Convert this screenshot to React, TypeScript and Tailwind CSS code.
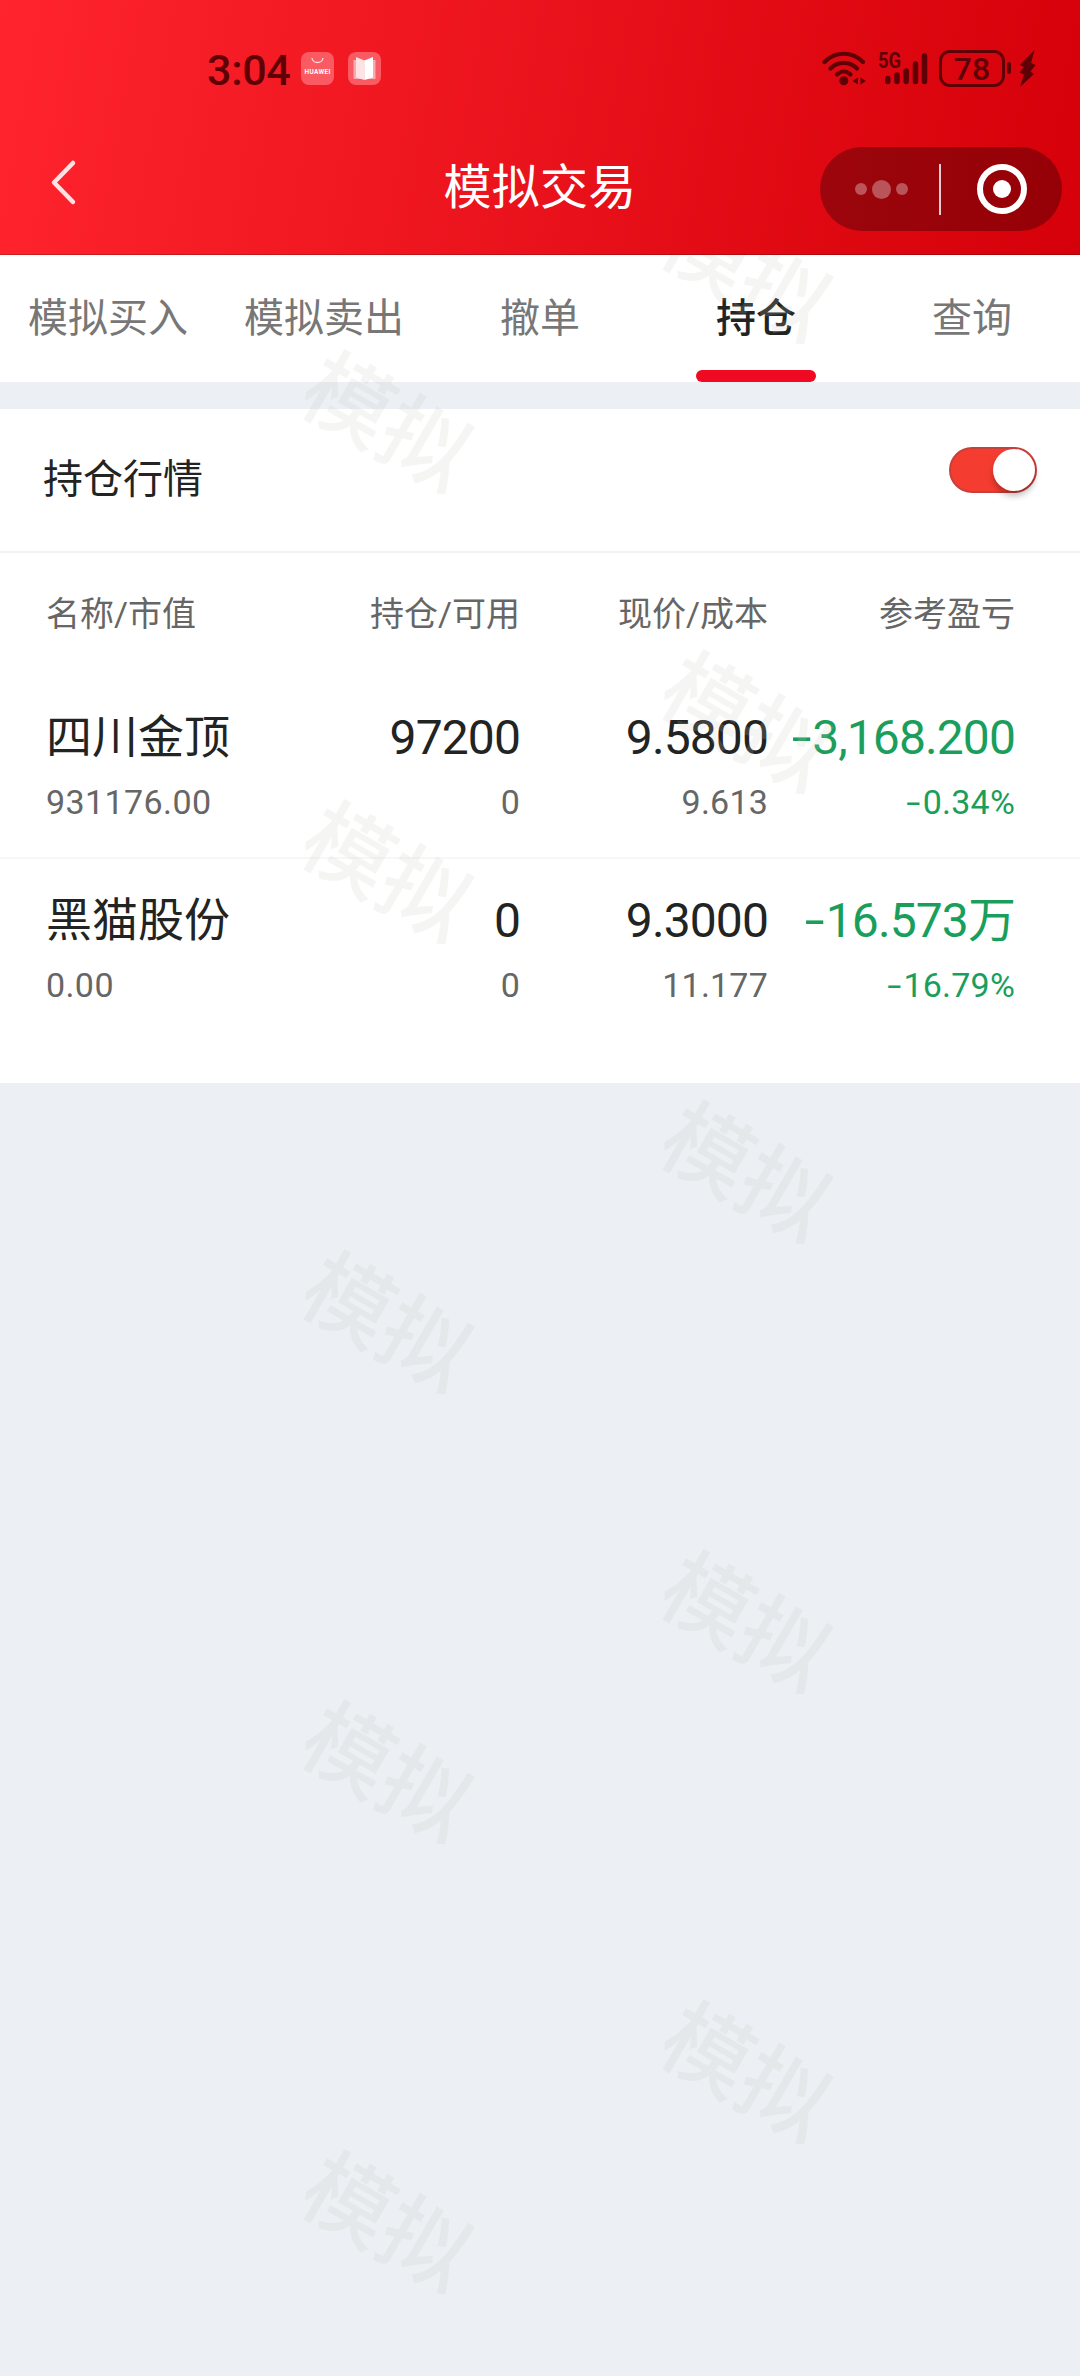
import { useState } from 'react';
import clsx from 'clsx';

interface Holding {
  name: string;
  marketValue: string;
  amount: string;
  available: string;
  price: string;
  cost: string;
  profit: string;
  profitRate: string;
}

const TABS = ['模拟买入', '模拟卖出', '撤单', '持仓', '查询'];

const COLUMNS = ['名称/市值', '持仓/可用', '现价/成本', '参考盈亏'];

const HOLDINGS: Holding[] = [
  {
    name: '四川金顶',
    marketValue: '931176.00',
    amount: '97200',
    available: '0',
    price: '9.5800',
    cost: '9.613',
    profit: '-3,168.200',
    profitRate: '-0.34%',
  },
  {
    name: '黑猫股份',
    marketValue: '0.00',
    amount: '0',
    available: '0',
    price: '9.3000',
    cost: '11.177',
    profit: '-16.573万',
    profitRate: '-16.79%',
  },
];

// Tile positions of the watermark layer, relative to the content below the header
const WATERMARKS = [
  { x: 745, y: 19 },
  { x: 386, y: 169 },
  { x: 745, y: 469 },
  { x: 386, y: 619 },
  { x: 745, y: 919 },
  { x: 386, y: 1069 },
  { x: 745, y: 1369 },
  { x: 386, y: 1519 },
  { x: 745, y: 1819 },
  { x: 386, y: 1969 },
];

const StatusBar = () => (
  <div className="flex h-[136px] items-center justify-between pl-[207px] pr-[44px] text-[#5f0006]">
    <div className="flex items-center">
      <span className="w-[94px] pt-[4px] text-[43px] font-medium leading-none tracking-[-0.3px]">3:04</span>
      <svg width="33" height="33" viewBox="0 0 33 33">
        <rect width="33" height="33" rx="8" fill="#fa5a62" />
        <path d="M11 6c1 6 10 6 11 0" fill="none" stroke="#ffd9db" strokeWidth="1.3" />
        <text x="16.5" y="21.5" textAnchor="middle" textLength="26" fontSize="6.5" fontWeight="700" fill="#fff">
          HUAWEI
        </text>
      </svg>
      <svg className="ml-[14px]" width="33" height="33" viewBox="0 0 33 33">
        <rect width="33" height="33" rx="8" fill="#fa5a62" />
        <path d="M5.500 8h22v19h-22z" fill="#fda9ad" />
        <path d="M8 5l8.500 3.500V28L8 25.500z" fill="#fde3e4" />
        <path d="M25 5l-8.500 3.500V28l8.500-2.500z" fill="#fff" />
      </svg>
    </div>
    <div className="flex items-center">
      {/* wifi */}
      <svg width="45" height="36" viewBox="0 0 45 36" fill="none" stroke="currentColor" strokeWidth="4.200" strokeLinecap="round">
        <path d="M2.500 12C13 1 30.500 1 41 12" />
        <path d="M8.500 18.500c7.500-7.500 19-7.500 26.500 0" />
        <path d="M15 24.500c4-4 9.500-4 13.500 0" />
        <circle cx="21.800" cy="30.800" r="4.500" fill="currentColor" stroke="none" />
        <path d="M36 27.500v7l-5.500-3.500zM38.500 27.500v7l5.500-3.500z" fill="currentColor" stroke="none" />
      </svg>
      {/* cellular */}
      <svg className="ml-[10px] overflow-visible" width="52" height="36" viewBox="0 0 52 36" stroke="currentColor" strokeWidth="5.500" strokeLinecap="round">
        <text x="1" y="18" textLength="23" lengthAdjust="spacingAndGlyphs" fontSize="22" fontWeight="700" fill="currentColor" stroke="none">
          5G
        </text>
        <path d="M10.800 28.500v3M20 25v6.500M29.200 21v10.500M38.500 14v17.500M47.500 6v25.500" />
      </svg>
      {/* battery */}
      <div className="ml-[10px] flex h-[37px] w-[66px] items-center justify-center rounded-[11px] border-[3px] border-current pt-px text-[32px] font-medium leading-none">
        78
      </div>
      <div className="ml-[2px] h-[12px] w-[4px] rounded-[2px] bg-current" />
      <svg className="ml-[8px]" width="17" height="37" viewBox="0 0 17 37" fill="currentColor">
        <path d="M15.500 0L1 15l4 2-4.500 5.500L5 24.500 1 37l14-13-3.500-2.500L16.500 15l-4.500-2z" />
      </svg>
    </div>
  </div>
);

const TitleBar = () => (
  <div className="grid h-[106px] grid-cols-[320px_1fr_320px] items-center">
    <button className="flex pl-[48px] pb-[14px]">
      <svg width="32" height="48" viewBox="0 0 32 48" fill="none" stroke="#ffe3e4" strokeWidth="4.500" strokeLinecap="round" strokeLinejoin="round">
        <path d="M25 5L6 24.500 25 44" />
      </svg>
    </button>
    <h1 className="pb-[3px] text-center text-[48px] leading-none tracking-[0.3px] text-white">模拟交易</h1>
    <div className="ml-[60px] flex h-[84px] w-[242px] items-center rounded-full bg-black/30">
      <button className="flex w-[119px] items-center justify-center gap-[5px] pl-[3px]">
        <span className="size-3 rounded-full bg-white/32" />
        <span className="size-[19px] rounded-full bg-white/32" />
        <span className="size-3 rounded-full bg-white/32" />
      </button>
      <span className="h-[51px] w-[2px] bg-white/80" />
      <button className="flex flex-1 justify-center">
        <span className="flex size-[50px] items-center justify-center rounded-full border-[6px] border-white">
          <span className="size-[18px] rounded-full bg-white" />
        </span>
      </button>
    </div>
  </div>
);

// Wide minus in front of losses
const Amount = ({ value }: { value: string }) =>
  value.startsWith('-') ? (
    <>
      <span className="mr-[2px] inline-block origin-right scale-x-150">-</span>
      {value.slice(1)}
    </>
  ) : (
    <>{value}</>
  );

interface CellProps {
  main: string;
  sub: string;
  className?: string;
}

const Cell = ({ main, sub, className }: CellProps) => (
  <div className={clsx('flex flex-col items-end gap-[6px] whitespace-nowrap', className)}>
    <span className="pt-px text-[48px] leading-[66px] tracking-[-0.9px]">
      <Amount value={main} />
    </span>
    <span className="text-[34px] leading-[50px] tracking-[0.2px]">
      <Amount value={sub} />
    </span>
  </div>
);

const HoldingRow = ({ holding }: { holding: Holding }) => (
  <div className="grid h-[183px] grid-cols-[254px_220px_248px_247px] border-b-2 border-[#f7f7f7] pl-[46px] pt-[28px] last:h-[224px] last:border-0">
    <div className="flex flex-col gap-[7px]">
      <span className="text-[46px] leading-[66px] text-[#222423]">{holding.name}</span>
      <span className="text-[34px] leading-[50px] tracking-[0.4px] text-[#666]">{holding.marketValue}</span>
    </div>
    <Cell main={holding.amount} sub={holding.available} className="text-[#222423] *:last:text-[#666]" />
    <Cell main={holding.price} sub={holding.cost} className="text-[#222423] *:last:text-[#666]" />
    <Cell main={holding.profit} sub={holding.profitRate} className="text-[#1a9e5c]" />
  </div>
);

export default function App() {
  const [activeTab, setActiveTab] = useState('持仓');
  const [showQuotes, setShowQuotes] = useState(true);

  return (
    <div className="flex h-[2376px] w-[1080px] flex-col overflow-hidden bg-[#ecf0f5] font-['Roboto','Noto_Sans_CJK_SC',sans-serif]">
      <header className="h-[255px] shrink-0 border-b border-black/20 bg-linear-[100deg] from-[#ff242e] to-[#d50009]">
        <StatusBar />
        <TitleBar />
      </header>

      <main className="relative flex-1 overflow-hidden">
        <nav className="grid h-[127px] grid-cols-5 bg-white">
          {TABS.map((tab) => (
            <button
              key={tab}
              onClick={() => setActiveTab(tab)}
              className={clsx(
                'flex flex-col items-center justify-between pt-[34px] text-[40px] leading-[60px]',
                tab === activeTab ? 'font-medium text-[#222423]' : 'text-[#777]'
              )}
            >
              {tab}
              {tab === activeTab && <span className="h-3 w-[120px] rounded-full bg-[#f00922]" />}
            </button>
          ))}
        </nav>

        <section className="mt-[27px] bg-white">
          <div className="flex h-[144px] items-start justify-between border-b-2 border-[#f2f2f2] pl-[43px] pr-[43px]">
            <span className="pt-[41px] text-[40px] leading-[60px] text-[#222423]">持仓行情</span>
            <button
              onClick={() => setShowQuotes(!showQuotes)}
              className={clsx(
                'mt-[38px] flex h-[46px] w-[88px] items-center rounded-full border-2',
                showQuotes ? 'justify-end border-[#c8403a] bg-[#f43d30]' : 'justify-start border-gray-300 bg-gray-200'
              )}
            >
              <span className="size-[42px] rounded-full bg-white shadow-[0_5px_6px_rgba(0,0,0,0.25)]" />
            </button>
          </div>

          <div className="grid h-[123px] grid-cols-[254px_220px_248px_247px] pl-[46px] pt-[36px] text-[34px] leading-[50px] text-[#666]">
            {COLUMNS.map((column) => (
              <span key={column} className="text-right first:text-left">
                {column}
              </span>
            ))}
          </div>

          <div>
            {HOLDINGS.map((holding) => (
              <HoldingRow key={holding.name} holding={holding} />
            ))}
          </div>
        </section>

        {/* Watermark layer */}
        <div className="pointer-events-none absolute inset-0">
          {WATERMARKS.map(({ x, y }) => (
            <span
              key={`${x}-${y}`}
              className="absolute -translate-x-1/2 -translate-y-1/2 rotate-30 whitespace-nowrap text-[88px] font-medium leading-none text-[rgb(198,202,196)]/18"
              style={{ left: x, top: y }}
            >
              模拟
            </span>
          ))}
        </div>
      </main>
    </div>
  );
}
